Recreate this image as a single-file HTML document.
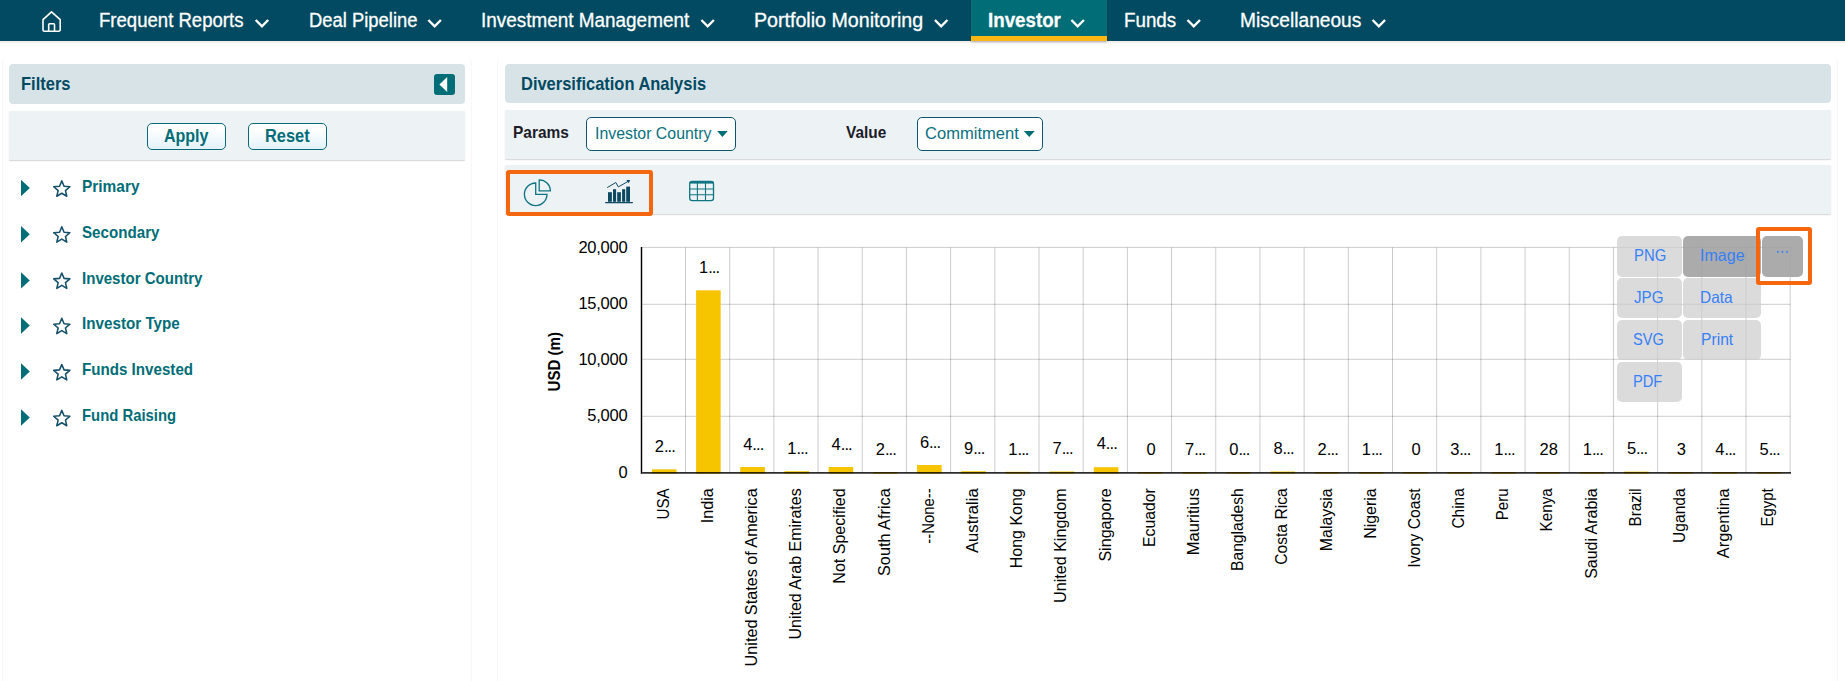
<!DOCTYPE html>
<html><head><meta charset="utf-8"><title>Diversification Analysis</title>
<style>
html,body{margin:0;padding:0;background:#fff;overflow:hidden;}
body{width:1845px;height:681px;position:relative;overflow:hidden;font-family:"Liberation Sans", sans-serif;}
.t{position:absolute;white-space:pre;transform-origin:0 0;font-family:"Liberation Sans", sans-serif;}
.abs{position:absolute;}
.ns{-webkit-text-stroke:0.3px #fff;}
.nav{left:0;top:0;width:1845px;height:41px;background:#024a61;}
.navshadow{left:0;top:41px;width:1845px;height:3px;background:linear-gradient(#efebeb,#f6f3f3 60%,#fff);}
.act{left:971px;top:0;width:136px;height:36px;background:#006d77;border-bottom:5px solid #fcb715;box-shadow:0 1px 2px rgba(60,70,100,0.4);}
.hdr{background:#d8e3e8;border-radius:4px;}
.bar{background:#edf2f5;border-radius:1px;box-shadow:0 1px 1.2px rgba(0,0,0,0.17);}
.btn{box-sizing:border-box;border:1.9px solid #0b6a78;border-radius:5px;background:linear-gradient(#fff 20%,#e3f2fb);}
.sel{box-sizing:border-box;border:1.9px solid #0d566b;border-radius:5px;background:#fff;}
.panel{box-sizing:border-box;border:1px solid #f7f7f7;border-top-color:transparent;border-radius:6px;}
.mi{background:rgba(205,205,205,0.72);border-radius:5px;}
.md{background:rgba(159,159,159,0.88);border-radius:5px;}
.obox{box-sizing:border-box;border:4px solid #f5670f;border-radius:3px;}
svg{position:absolute;left:0;top:0;overflow:visible;}
</style></head><body>
<div class="abs panel" style="left:2px;top:57px;width:470px;height:632px"></div>
<div class="abs panel" style="left:497px;top:57px;width:1341px;height:632px"></div>
<div class="abs nav"></div><div class="abs navshadow"></div><div class="abs act"></div>
<div class="abs hdr" style="left:9px;top:64px;width:456px;height:40px"></div>
<div class="abs bar" style="left:9px;top:111px;width:456px;height:49px"></div>
<div class="abs btn" style="left:147px;top:123px;width:79px;height:27px"></div>
<div class="abs btn" style="left:248px;top:123px;width:79px;height:27px"></div>
<div class="abs" style="left:434px;top:74px;width:21px;height:21px;border-radius:3px;background:#006d77"></div>
<div class="abs hdr" style="left:505px;top:64px;width:1326px;height:39px"></div>
<div class="abs bar" style="left:505px;top:110px;width:1326px;height:48.7px"></div>
<div class="abs bar" style="left:505px;top:165px;width:1326px;height:48.8px"></div>
<div class="abs sel" style="left:586px;top:117px;width:150px;height:34px"></div>
<div class="abs sel" style="left:917px;top:117px;width:126px;height:34px"></div>
<svg class="chart" width="1845" height="681" viewBox="0 0 1845 681" font-family='"Liberation Sans", sans-serif' font-size="16.5">
<path d="M685.49,247.5V472.5M729.68,247.5V472.5M773.87,247.5V472.5M818.05,247.5V472.5M862.24,247.5V472.5M906.43,247.5V472.5M950.62,247.5V472.5M994.81,247.5V472.5M1039.00,247.5V472.5M1083.18,247.5V472.5M1127.37,247.5V472.5M1171.56,247.5V472.5M1215.75,247.5V472.5M1259.94,247.5V472.5M1304.13,247.5V472.5M1348.32,247.5V472.5M1392.50,247.5V472.5M1436.69,247.5V472.5M1480.88,247.5V472.5M1525.07,247.5V472.5M1569.26,247.5V472.5M1613.45,247.5V472.5M1657.63,247.5V472.5M1701.82,247.5V472.5M1746.01,247.5V472.5M1790.20,247.5V472.5M641.5,247.40H1790.4M641.5,304.30H1790.4M641.5,359.30H1790.4M641.5,416.30H1790.4" stroke="#000" stroke-opacity="0.2" stroke-width="1" fill="none"/>
<rect x="651.89" y="469.30" width="24.6" height="4.30" fill="#f6c500"/>
<rect x="696.08" y="290.30" width="24.6" height="183.30" fill="#f6c500"/>
<rect x="740.27" y="467.00" width="24.6" height="6.60" fill="#f6c500"/>
<rect x="784.46" y="471.20" width="24.6" height="2.40" fill="#f6c500"/>
<rect x="828.65" y="467.00" width="24.6" height="6.60" fill="#f6c500"/>
<rect x="872.84" y="472.10" width="24.6" height="1.50" fill="#f6c500"/>
<rect x="917.03" y="465.00" width="24.6" height="8.60" fill="#f6c500"/>
<rect x="961.21" y="471.20" width="24.6" height="2.40" fill="#f6c500"/>
<rect x="1005.40" y="471.80" width="24.6" height="1.80" fill="#f6c500"/>
<rect x="1049.59" y="471.50" width="24.6" height="2.10" fill="#f6c500"/>
<rect x="1093.78" y="467.20" width="24.6" height="6.40" fill="#f6c500"/>
<rect x="1137.97" y="472.10" width="24.6" height="1.50" fill="#f6c500"/>
<rect x="1182.16" y="472.10" width="24.6" height="1.50" fill="#f6c500"/>
<rect x="1226.34" y="472.10" width="24.6" height="1.50" fill="#f6c500"/>
<rect x="1270.53" y="471.50" width="24.6" height="2.10" fill="#f6c500"/>
<rect x="1314.72" y="472.10" width="24.6" height="1.50" fill="#f6c500"/>
<rect x="1358.91" y="472.10" width="24.6" height="1.50" fill="#f6c500"/>
<rect x="1403.10" y="472.10" width="24.6" height="1.50" fill="#f6c500"/>
<rect x="1447.29" y="472.10" width="24.6" height="1.50" fill="#f6c500"/>
<rect x="1491.47" y="472.10" width="24.6" height="1.50" fill="#f6c500"/>
<rect x="1535.66" y="472.10" width="24.6" height="1.50" fill="#f6c500"/>
<rect x="1579.85" y="472.10" width="24.6" height="1.50" fill="#f6c500"/>
<rect x="1624.04" y="471.60" width="24.6" height="2.00" fill="#f6c500"/>
<rect x="1668.23" y="472.10" width="24.6" height="1.50" fill="#f6c500"/>
<rect x="1712.42" y="472.10" width="24.6" height="1.50" fill="#f6c500"/>
<rect x="1756.61" y="472.10" width="24.6" height="1.50" fill="#f6c500"/>
<path d="M641.5,247.0V473.8" stroke="#000" stroke-width="1.45"/>
<path d="M642.2,472.9H1791" stroke="#000" stroke-opacity="0.82" stroke-width="1.9"/>
<text x="627.4" y="252.60" text-anchor="end" letter-spacing="-0.25">20,000</text>
<text x="627.4" y="308.85" text-anchor="end" letter-spacing="-0.25">15,000</text>
<text x="627.4" y="365.10" text-anchor="end" letter-spacing="-0.25">10,000</text>
<text x="627.4" y="421.35" text-anchor="end" letter-spacing="-0.25">5,000</text>
<text x="627.4" y="477.60" text-anchor="end" letter-spacing="-0.25">0</text>
<text transform="translate(560.4,361.7) rotate(-90)" text-anchor="middle" font-weight="700" textLength="59.5" lengthAdjust="spacingAndGlyphs">USD (m)</text>
<text x="664.89" y="451.90" text-anchor="middle">2<tspan letter-spacing="-0.9">...</tspan></text>
<text x="709.08" y="272.80" text-anchor="middle">1<tspan letter-spacing="-0.9">...</tspan></text>
<text x="753.27" y="450.00" text-anchor="middle">4<tspan letter-spacing="-0.9">...</tspan></text>
<text x="797.46" y="454.30" text-anchor="middle">1<tspan letter-spacing="-0.9">...</tspan></text>
<text x="841.65" y="450.00" text-anchor="middle">4<tspan letter-spacing="-0.9">...</tspan></text>
<text x="885.84" y="454.90" text-anchor="middle">2<tspan letter-spacing="-0.9">...</tspan></text>
<text x="930.02" y="448.00" text-anchor="middle">6<tspan letter-spacing="-0.9">...</tspan></text>
<text x="974.21" y="454.30" text-anchor="middle">9<tspan letter-spacing="-0.9">...</tspan></text>
<text x="1018.40" y="454.60" text-anchor="middle">1<tspan letter-spacing="-0.9">...</tspan></text>
<text x="1062.59" y="453.90" text-anchor="middle">7<tspan letter-spacing="-0.9">...</tspan></text>
<text x="1106.78" y="449.40" text-anchor="middle">4<tspan letter-spacing="-0.9">...</tspan></text>
<text x="1150.97" y="454.60" text-anchor="middle">0</text>
<text x="1195.16" y="454.60" text-anchor="middle">7<tspan letter-spacing="-0.9">...</tspan></text>
<text x="1239.34" y="454.60" text-anchor="middle">0<tspan letter-spacing="-0.9">...</tspan></text>
<text x="1283.53" y="453.90" text-anchor="middle">8<tspan letter-spacing="-0.9">...</tspan></text>
<text x="1327.72" y="454.60" text-anchor="middle">2<tspan letter-spacing="-0.9">...</tspan></text>
<text x="1371.91" y="454.60" text-anchor="middle">1<tspan letter-spacing="-0.9">...</tspan></text>
<text x="1416.10" y="454.60" text-anchor="middle">0</text>
<text x="1460.29" y="454.60" text-anchor="middle">3<tspan letter-spacing="-0.9">...</tspan></text>
<text x="1504.47" y="454.60" text-anchor="middle">1<tspan letter-spacing="-0.9">...</tspan></text>
<text x="1548.66" y="454.60" text-anchor="middle">28</text>
<text x="1592.85" y="454.60" text-anchor="middle">1<tspan letter-spacing="-0.9">...</tspan></text>
<text x="1637.04" y="453.90" text-anchor="middle">5<tspan letter-spacing="-0.9">...</tspan></text>
<text x="1681.23" y="454.60" text-anchor="middle">3</text>
<text x="1725.42" y="454.60" text-anchor="middle">4<tspan letter-spacing="-0.9">...</tspan></text>
<text x="1769.61" y="454.60" text-anchor="middle">5<tspan letter-spacing="-0.9">...</tspan></text>
<text transform="translate(668.69,519.60) rotate(-90)" textLength="31.3" lengthAdjust="spacingAndGlyphs">USA</text>
<text transform="translate(712.88,523.30) rotate(-90)" textLength="35.0" lengthAdjust="spacingAndGlyphs">India</text>
<text transform="translate(757.07,666.40) rotate(-90)" textLength="178.1" lengthAdjust="spacingAndGlyphs">United States of America</text>
<text transform="translate(801.26,639.50) rotate(-90)" textLength="151.2" lengthAdjust="spacingAndGlyphs">United Arab Emirates</text>
<text transform="translate(845.45,583.70) rotate(-90)" textLength="95.4" lengthAdjust="spacingAndGlyphs">Not Specified</text>
<text transform="translate(889.64,576.00) rotate(-90)" textLength="87.7" lengthAdjust="spacingAndGlyphs">South Africa</text>
<text transform="translate(933.83,543.70) rotate(-90)" textLength="55.4" lengthAdjust="spacingAndGlyphs">--None--</text>
<text transform="translate(978.01,553.00) rotate(-90)" textLength="64.7" lengthAdjust="spacingAndGlyphs">Australia</text>
<text transform="translate(1022.20,568.20) rotate(-90)" textLength="79.9" lengthAdjust="spacingAndGlyphs">Hong Kong</text>
<text transform="translate(1066.39,602.90) rotate(-90)" textLength="114.6" lengthAdjust="spacingAndGlyphs">United Kingdom</text>
<text transform="translate(1110.58,561.60) rotate(-90)" textLength="73.3" lengthAdjust="spacingAndGlyphs">Singapore</text>
<text transform="translate(1154.77,547.00) rotate(-90)" textLength="58.7" lengthAdjust="spacingAndGlyphs">Ecuador</text>
<text transform="translate(1198.96,555.30) rotate(-90)" textLength="67.0" lengthAdjust="spacingAndGlyphs">Mauritius</text>
<text transform="translate(1243.14,571.00) rotate(-90)" textLength="82.7" lengthAdjust="spacingAndGlyphs">Bangladesh</text>
<text transform="translate(1287.33,564.80) rotate(-90)" textLength="76.5" lengthAdjust="spacingAndGlyphs">Costa Rica</text>
<text transform="translate(1331.52,551.20) rotate(-90)" textLength="62.9" lengthAdjust="spacingAndGlyphs">Malaysia</text>
<text transform="translate(1375.71,538.80) rotate(-90)" textLength="50.5" lengthAdjust="spacingAndGlyphs">Nigeria</text>
<text transform="translate(1419.90,567.70) rotate(-90)" textLength="79.4" lengthAdjust="spacingAndGlyphs">Ivory Coast</text>
<text transform="translate(1464.09,528.50) rotate(-90)" textLength="40.2" lengthAdjust="spacingAndGlyphs">China</text>
<text transform="translate(1508.27,520.20) rotate(-90)" textLength="31.9" lengthAdjust="spacingAndGlyphs">Peru</text>
<text transform="translate(1552.46,531.40) rotate(-90)" textLength="43.1" lengthAdjust="spacingAndGlyphs">Kenya</text>
<text transform="translate(1596.65,578.80) rotate(-90)" textLength="90.5" lengthAdjust="spacingAndGlyphs">Saudi Arabia</text>
<text transform="translate(1640.84,526.40) rotate(-90)" textLength="38.1" lengthAdjust="spacingAndGlyphs">Brazil</text>
<text transform="translate(1685.03,542.90) rotate(-90)" textLength="54.6" lengthAdjust="spacingAndGlyphs">Uganda</text>
<text transform="translate(1729.22,558.20) rotate(-90)" textLength="69.9" lengthAdjust="spacingAndGlyphs">Argentina</text>
<text transform="translate(1773.41,526.40) rotate(-90)" textLength="38.1" lengthAdjust="spacingAndGlyphs">Egypt</text>
</svg>
<div class="abs mi" style="left:1617px;top:236px;width:65px;height:41px"></div>
<div class="abs mi" style="left:1617px;top:278px;width:65px;height:40px"></div>
<div class="abs mi" style="left:1617px;top:320px;width:65px;height:40px"></div>
<div class="abs mi" style="left:1617px;top:362px;width:65px;height:40px"></div>
<div class="abs md" style="left:1683px;top:236px;width:78px;height:41px"></div>
<div class="abs mi" style="left:1683px;top:278px;width:78px;height:40px"></div>
<div class="abs mi" style="left:1683px;top:320px;width:78px;height:40px"></div>
<div class="abs md" style="left:1762px;top:236px;width:41px;height:41px"></div>
<div class="abs obox" style="left:1756px;top:227px;width:56px;height:58px"></div>
<div class="abs obox" style="left:506px;top:170px;width:147px;height:46px"></div>
<svg width="1845" height="681" viewBox="0 0 1845 681">
<g fill="none" stroke="#fff" stroke-width="2.4" stroke-linejoin="miter"><path d="M255.70,20l6.25,6.3l6.25,-6.3"/><path d="M428.40,20l6.25,6.3l6.25,-6.3"/><path d="M701.40,20l6.25,6.3l6.25,-6.3"/><path d="M934.90,20l6.25,6.3l6.25,-6.3"/><path d="M1071.40,20l6.25,6.3l6.25,-6.3"/><path d="M1187.50,20l6.25,6.3l6.25,-6.3"/><path d="M1372.60,20l6.25,6.3l6.25,-6.3"/></g>
<g fill="none" stroke="#fff" stroke-width="1.6" stroke-linejoin="round"><path d="M43,19.6L51.5,11.8L60.2,19.6V29.7a1.5,1.5 0 0 1 -1.5,1.5H44.5a1.5,1.5 0 0 1 -1.5,-1.5Z"/><path d="M48.7,31.2V24.6a0.8,0.8 0 0 1 0.8,-0.8h4.2a0.8,0.8 0 0 1 0.8,0.8V31.2"/></g>
<path d="M447.2,77v15.1l-7.8,-7.55z" fill="#fff"/>
<g fill="#006d77"><path d="M21,179.8v16.4l8.8,-8.2z"/><path d="M21,226.0v16.4l8.8,-8.2z"/><path d="M21,272.2v16.4l8.8,-8.2z"/><path d="M21,317.3v16.4l8.8,-8.2z"/><path d="M21,363.3v16.4l8.8,-8.2z"/><path d="M21,409.3v16.4l8.8,-8.2z"/></g>
<g fill="none" stroke="#14506a" stroke-width="1.55" stroke-linejoin="round"><polygon points="61.80,180.90 64.06,186.29 69.88,186.77 65.46,190.59 66.80,196.28 61.80,193.25 56.80,196.28 58.14,190.59 53.72,186.77 59.54,186.29"/><polygon points="61.80,226.80 64.06,232.19 69.88,232.67 65.46,236.49 66.80,242.18 61.80,239.15 56.80,242.18 58.14,236.49 53.72,232.67 59.54,232.19"/><polygon points="61.80,273.00 64.06,278.39 69.88,278.87 65.46,282.69 66.80,288.38 61.80,285.35 56.80,288.38 58.14,282.69 53.72,278.87 59.54,278.39"/><polygon points="61.80,318.30 64.06,323.69 69.88,324.17 65.46,327.99 66.80,333.68 61.80,330.65 56.80,333.68 58.14,327.99 53.72,324.17 59.54,323.69"/><polygon points="61.80,364.50 64.06,369.89 69.88,370.37 65.46,374.19 66.80,379.88 61.80,376.85 56.80,379.88 58.14,374.19 53.72,370.37 59.54,369.89"/><polygon points="61.80,410.40 64.06,415.79 69.88,416.27 65.46,420.09 66.80,425.78 61.80,422.75 56.80,425.78 58.14,420.09 53.72,416.27 59.54,415.79"/></g>
<path d="M717.1,131h10.6l-5.3,6z" fill="#006d77"/><path d="M1023.8,131h10.9l-5.45,6z" fill="#006d77"/>
<g fill="none" stroke="#0e7583" stroke-width="1.3" stroke-linejoin="miter" transform="translate(0.6,-0.2)"><path d="M535.1,183.2A11.3,11.3 0 1 0 546.4,194.5H535.1Z"/><path d="M538.6,180A11.1,11.1 0 0 1 549.8,191H538.6Z"/></g>
<g fill="#0d4a62" stroke="none"><rect x="608" y="192.2" width="3.9" height="9.6"/><rect x="613" y="189.2" width="3.1" height="12.6"/><rect x="617.2" y="192.2" width="3.7" height="9.6"/><rect x="622.1" y="189.2" width="3.1" height="12.6"/><rect x="626.2" y="186.6" width="3.8" height="15.2"/><rect x="605" y="201.9" width="28" height="1.3" rx="0.6"/><path d="M626.3,180.1h3.9l-1.4,3.2z"/></g>
<path d="M607.2,187.6L615.8,182.5L618.3,186.9L628.3,181.3" fill="none" stroke="#0d4a62" stroke-width="1"/>
<g fill="none" stroke="#0e7583" stroke-width="1.3"><rect x="689.7" y="181.3" width="23.8" height="19.4" rx="2.6"/><path d="M689.7,182.6h23.8" stroke-width="2"/><path d="M697.4,183v17.6M705.5,183v17.6M689.7,189h23.8M689.7,194.8h23.8" stroke-width="1.1"/></g>
<g fill="#3b82f6"><rect x="1777" y="250.9" width="1.7" height="1.9"/><rect x="1781.6" y="250.9" width="1.7" height="1.9"/><rect x="1786.2" y="250.9" width="1.7" height="1.9"/></g>
</svg>
<span class="t ns" style="left:98.71px;top:9.00px;font-size:19.6px;line-height:22px;font-weight:400;color:#fff;transform:scaleX(0.9473)">Frequent Reports</span>
<span class="t ns" style="left:308.62px;top:9.00px;font-size:19.6px;line-height:22px;font-weight:400;color:#fff;transform:scaleX(0.9398)">Deal Pipeline</span>
<span class="t ns" style="left:481.17px;top:9.00px;font-size:19.6px;line-height:22px;font-weight:400;color:#fff;transform:scaleX(0.9654)">Investment Management</span>
<span class="t ns" style="left:754.10px;top:9.00px;font-size:19.6px;line-height:22px;font-weight:400;color:#fff;transform:scaleX(1.0018)">Portfolio Monitoring</span>
<span class="t ns" style="left:987.74px;top:9.00px;font-size:19.6px;line-height:22px;font-weight:700;color:#fff;transform:scaleX(0.9560)">Investor</span>
<span class="t ns" style="left:1124.08px;top:9.00px;font-size:19.6px;line-height:22px;font-weight:400;color:#fff;transform:scaleX(0.9577)">Funds</span>
<span class="t ns" style="left:1239.75px;top:9.00px;font-size:19.6px;line-height:22px;font-weight:400;color:#fff;transform:scaleX(0.9770)">Miscellaneous</span>
<span class="t " style="left:21.21px;top:73.00px;font-size:18.6px;line-height:21px;font-weight:700;color:#024a61;transform:scaleX(0.8870)">Filters</span>
<span class="t " style="left:163.84px;top:125.00px;font-size:18.6px;line-height:21px;font-weight:700;color:#006d77;transform:scaleX(0.8608)">Apply</span>
<span class="t " style="left:265.02px;top:125.00px;font-size:18.6px;line-height:21px;font-weight:700;color:#006d77;transform:scaleX(0.8820)">Reset</span>
<span class="t " style="left:81.96px;top:177.00px;font-size:16.5px;line-height:18px;font-weight:700;color:#006d77;transform:scaleX(0.9367)">Primary</span>
<span class="t " style="left:81.98px;top:223.00px;font-size:16.5px;line-height:18px;font-weight:700;color:#006d77;transform:scaleX(0.9181)">Secondary</span>
<span class="t " style="left:81.99px;top:269.00px;font-size:16.5px;line-height:18px;font-weight:700;color:#006d77;transform:scaleX(0.9122)">Investor Country</span>
<span class="t " style="left:81.98px;top:314.00px;font-size:16.5px;line-height:18px;font-weight:700;color:#006d77;transform:scaleX(0.9219)">Investor Type</span>
<span class="t " style="left:81.98px;top:360.00px;font-size:16.5px;line-height:18px;font-weight:700;color:#006d77;transform:scaleX(0.9176)">Funds Invested</span>
<span class="t " style="left:82.00px;top:406.00px;font-size:16.5px;line-height:18px;font-weight:700;color:#006d77;transform:scaleX(0.9010)">Fund Raising</span>
<span class="t " style="left:521.01px;top:73.00px;font-size:18.6px;line-height:21px;font-weight:700;color:#024a61;transform:scaleX(0.8855)">Diversification Analysis</span>
<span class="t " style="left:512.86px;top:123.00px;font-size:16.5px;line-height:18px;font-weight:700;color:#1c1c28;transform:scaleX(0.9379)">Params</span>
<span class="t " style="left:845.80px;top:123.00px;font-size:16.5px;line-height:18px;font-weight:700;color:#1c1c28;transform:scaleX(0.9349)">Value</span>
<span class="t " style="left:594.84px;top:124.00px;font-size:16.5px;line-height:18px;font-weight:400;color:#0b7180;transform:scaleX(0.9617)">Investor Country</span>
<span class="t " style="left:925.40px;top:124.00px;font-size:16.5px;line-height:18px;font-weight:400;color:#0b7180;transform:scaleX(1.0032)">Commitment</span>
<span class="t " style="left:1633.50px;top:246.00px;font-size:16.5px;line-height:18px;font-weight:400;color:#3680f6;transform:scaleX(0.9000)">PNG</span>
<span class="t " style="left:1633.80px;top:288.00px;font-size:16.5px;line-height:18px;font-weight:400;color:#3680f6;transform:scaleX(0.9161)">JPG</span>
<span class="t " style="left:1632.92px;top:330.00px;font-size:16.5px;line-height:18px;font-weight:400;color:#3680f6;transform:scaleX(0.8848)">SVG</span>
<span class="t " style="left:1632.91px;top:372.00px;font-size:16.5px;line-height:18px;font-weight:400;color:#3680f6;transform:scaleX(0.8875)">PDF</span>
<span class="t " style="left:1700.43px;top:246.00px;font-size:16.5px;line-height:18px;font-weight:400;color:#3680f6;transform:scaleX(0.9727)">Image</span>
<span class="t " style="left:1700.46px;top:288.00px;font-size:16.5px;line-height:18px;font-weight:400;color:#3680f6;transform:scaleX(0.9353)">Data</span>
<span class="t " style="left:1700.65px;top:330.00px;font-size:16.5px;line-height:18px;font-weight:400;color:#3680f6;transform:scaleX(0.9485)">Print</span>
</body></html>
